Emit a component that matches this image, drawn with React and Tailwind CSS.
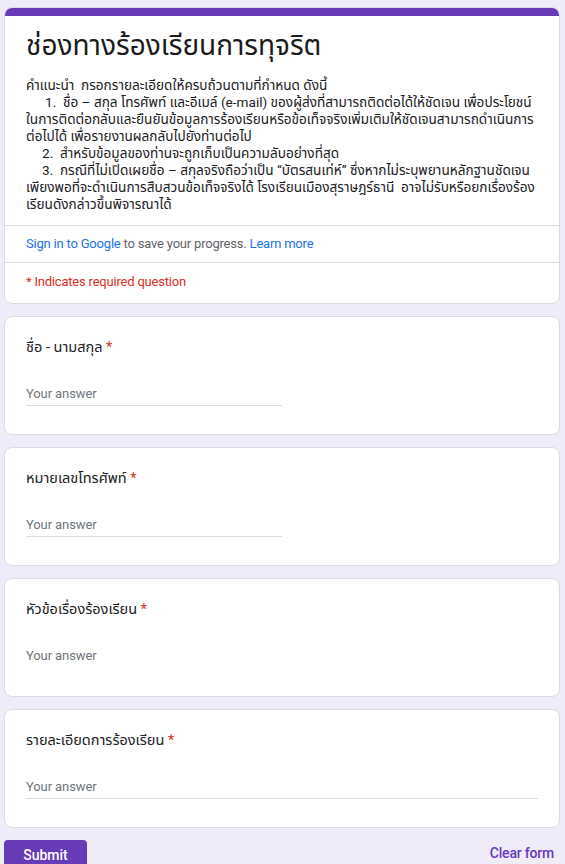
import React from 'react';

const questions = [
  { label: 'ชื่อ - นามสกุล', line: 'short' },
  { label: 'หมายเลขโทรศัพท์', line: 'short' },
  { label: 'หัวข้อเรื่องร้องเรียน', line: 'none' },
  { label: 'รายละเอียดการร้องเรียน', line: 'long' },
];

const Question = ({ label, line }) => (
  <div className="bg-white rounded-lg border border-[#dadce0] px-[21px] pt-[21px] pb-[28px]">
    <div className="text-[14.5px] leading-[20px] text-[#202124]">
      {label}
      <span className="text-[#d93025]"> *</span>
    </div>
    <div
      className={`mt-[26px] text-[13px] tracking-[-0.1px] leading-[20px] text-[#70757a] pb-[1px] ${
        line === 'short'
          ? 'w-[256px] border-b border-[#dadce0]'
          : line === 'long'
          ? 'w-full border-b border-[#dadce0]'
          : 'border-b border-transparent'
      }`}
    >
      Your answer
    </div>
  </div>
);

const App = () => {
  return (
    <div className="min-h-screen bg-[#f0ebf8] pt-[7px] pl-[4px] font-['Roboto','Noto_Sans','Noto_Sans_Thai','Liberation_Sans',sans-serif]">
      <div className="w-[556px] flex flex-col gap-3">

        {/* Header */}
        <div className="bg-white rounded-lg border border-[#dadce0] overflow-hidden">
          <div className="h-[9px] bg-[#673ab7] -mx-px -mt-px" />
          <div className="px-[21px] pt-[14px] pb-[12px] border-b border-[#dadce0]">
            <h1 className="text-[28px] leading-[32px] text-[#1b1b1b]">ช่องทางร้องเรียนการทุจริต</h1>
            <div className="mt-[15px] text-[13.6px] leading-[17px] text-[#202124] whitespace-nowrap">
              <div>คำแนะนำ&nbsp; กรอกรายละเอียดให้ครบถ้วนตามที่กำหนด ดังนี้</div>
              <div className="pl-[19px]">1.&nbsp; ชื่อ – สกุล โทรศัพท์ และอีเมล์ (e-mail) ของผู้ส่งที่สามารถติดต่อได้ให้ชัดเจน เพื่อประโยชน์</div>
              <div>ในการติดต่อกลับและยืนยันข้อมูลการร้องเรียนหรือข้อเท็จจริงเพิ่มเติมให้ชัดเจนสามารถดำเนินการ</div>
              <div>ต่อไปได้ เพื่อรายงานผลกลับไปยังท่านต่อไป</div>
              <div className="pl-[16px]">2.&nbsp; สำหรับข้อมูลของท่านจะถูกเก็บเป็นความลับอย่างที่สุด</div>
              <div className="pl-[16px]">3.&nbsp; กรณีที่ไม่เปิดเผยชื่อ – สกุลจริงถือว่าเป็น “บัตรสนเท่ห์” ซึ่งหากไม่ระบุพยานหลักฐานชัดเจน</div>
              <div>เพียงพอที่จะดำเนินการสืบสวนข้อเท็จจริงได้ โรงเรียนเมืองสุราษฎร์ธานี&nbsp; อาจไม่รับหรือยกเรื่องร้อง</div>
              <div>เรียนดังกล่าวขึ้นพิจารณาได้</div>
            </div>
          </div>
          <div className="h-[37px] px-[21px] flex items-center border-b border-[#dadce0] text-[13px] tracking-[-0.2px] text-[#5f6368]">
            <span className="text-[#1a73e8]">Sign in to Google</span>
            <span>&nbsp;to save your progress.&nbsp;</span>
            <span className="text-[#1a73e8]">Learn more</span>
          </div>
          <div className="px-[21px] pt-[9px] pb-[11px] text-[13px] tracking-[-0.2px] leading-[20px] text-[#d93025]">
            * Indicates required question
          </div>
        </div>

        {questions.map((q) => (
          <Question key={q.label} label={q.label} line={q.line} />
        ))}

        {/* Actions */}
        <div className="flex items-start justify-between">
          <button className="h-9 w-[83px] rounded bg-[#673ab7] text-white text-[14px] font-medium pb-[6px]">
            Submit
          </button>
          <button className="mt-[3px] mr-[6px] text-[14px] tracking-[-0.2px] font-medium text-[#673ab7]">
            Clear form
          </button>
        </div>
      </div>
    </div>
  );
};

export default App;
